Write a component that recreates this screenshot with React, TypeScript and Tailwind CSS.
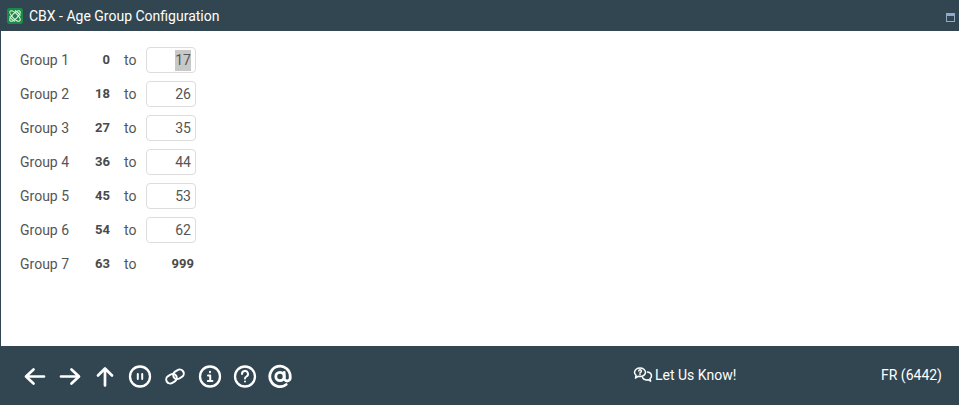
const groups = [
  { name: "Group 1", from: 0, to: 17 },
  { name: "Group 2", from: 18, to: 26 },
  { name: "Group 3", from: 27, to: 35 },
  { name: "Group 4", from: 36, to: 44 },
  { name: "Group 5", from: 45, to: 53 },
  { name: "Group 6", from: 54, to: 62 },
];

function Logo() {
  return (
    <svg width="16" height="16" viewBox="0 0 16 16" className="rounded-[2px]">
      <rect width="16" height="16" rx="1.500" fill="#1a8a45" />
      <g fill="none" stroke="#e6f5ea" strokeWidth="1.100">
        <ellipse cx="8" cy="8" rx="6.800" ry="2.600" transform="rotate(45 8 8)" />
        <ellipse cx="8" cy="8" rx="6.800" ry="2.600" transform="rotate(-45 8 8)" />
        <path d="M2.500 8.500c1.500 2 3.500 4 5.500 5M13.500 7.500c-1.500-2-3.500-4-5.500-5" />
      </g>
    </svg>
  );
}

function NavIcon({ children }: { children: React.ReactNode }) {
  return (
    <svg width="24" height="24" viewBox="0 0 24 24" fill="none" stroke="white" strokeWidth="2.300" strokeLinecap="round" strokeLinejoin="round" className="block">
      {children}
    </svg>
  );
}

export default function App() {
  return (
    <div className="flex h-[405px] w-[959px] flex-col overflow-hidden bg-[#324651] font-['Roboto',sans-serif]">
      <header className="flex h-[31px] shrink-0 items-center pl-[7px] pr-[4px] text-white">
        <Logo />
        <h1 className="ml-[6px] text-[14px] leading-none">CBX - Age Group Configuration</h1>
        <div className="ml-auto mt-[4px] h-[9px] w-[9px] border border-t-[3px] border-[#8faacb]" />
      </header>

      <main className="ml-px flex h-[315px] shrink-0 flex-col bg-white pl-[19px] pt-[16px] text-[14px] text-[#555]">
        {groups.map((g, i) => (
          <div key={g.name} className="mb-[8px] flex h-[26px] items-center">
            <span className="w-[65px]">{g.name}</span>
            <b className="w-[25px] text-right text-[13px] text-[#4a4a4a]">{g.from}</b>
            <span className="ml-[14px] w-[21px]">to</span>
            <div className="ml-[1px] flex h-[26px] w-[50px] items-center justify-end rounded-[4px] border border-[#ddd] pr-[4px]">
              <span className={i === 0 ? "bg-[#c8c8c8]" : ""}>{g.to}</span>
            </div>
          </div>
        ))}
        <div className="flex h-[26px] items-center">
          <span className="w-[65px]">Group 7</span>
          <b className="w-[25px] text-right text-[13px] text-[#4a4a4a]">63</b>
          <span className="ml-[14px] w-[21px]">to</span>
          <b className="w-[49px] text-right text-[13px] text-[#4a4a4a]">999</b>
        </div>
      </main>

      <footer className="flex flex-1 items-center pb-[1px] pl-[23px] pr-[17px] text-[14px] text-white">
        <nav className="flex items-center gap-[11px] pt-[2px]">
          <NavIcon><path strokeWidth="2.700" d="M3.500 12.500h17.500M10.500 5.500l-7.500 7 7.500 7" /></NavIcon>
          <NavIcon><path strokeWidth="2.700" d="M3 12.500h17.500M13.500 5.500l7.500 7-7.500 7" /></NavIcon>
          <NavIcon><path strokeWidth="2.700" d="M12 21.500V4.500M5 11.500l7-7 7 7" /></NavIcon>
          <NavIcon>
            <circle cx="12" cy="12.500" r="10" />
            <path strokeWidth="2" d="M9.800 10v5M14.200 10v5" />
          </NavIcon>
          <NavIcon>
            <rect x="3" y="10.700" width="11" height="8" rx="4" strokeWidth="2" transform="rotate(-32 8.500 14.700)" />
            <rect x="10" y="6.300" width="11" height="8" rx="4" strokeWidth="2" transform="rotate(-32 15.500 10.300)" />
          </NavIcon>
          <NavIcon>
            <circle cx="12" cy="12.500" r="10" />
            <path strokeWidth="2" d="M10 11.500h2.200v5M9.800 17h4.600M12 7.800v.4" />
          </NavIcon>
          <NavIcon>
            <circle cx="12" cy="12.500" r="10" />
            <path strokeWidth="2" d="M9 10a3 3 0 1 1 4.500 2.500c-1 .6-1.500 1-1.500 2M12 17.500v.1" />
          </NavIcon>
          <NavIcon>
            <circle cx="12" cy="12.500" r="4.200" strokeWidth="2.800" />
            <path d="M16.200 8.500v5.500a3 3 0 0 0 6 0v-1.500a10.200 10.200 0 1 0-4 8" strokeWidth="2.800" />
          </NavIcon>
        </nav>
        <div className="ml-[341px] flex items-center gap-[2px]">
          <svg width="20" height="18" viewBox="0 0 20 18" fill="none" stroke="white" strokeWidth="1.500" strokeLinecap="round" strokeLinejoin="round">
            <path d="M7 2c3 0 5.500 1.900 5.500 4.300S10 10.600 7 10.600c-.7 0-1.300-.1-1.900-.3L2.500 12l.6-2.700C2 8.500 1.500 7.500 1.500 6.300 1.500 3.900 4 2 7 2z" />
            <path d="M14.500 6c2.200.4 4 1.900 4 3.900 0 1-.5 2-1.500 2.700l.6 2.600-2.600-1.500c-2.200.5-4.600-.3-5.500-2" />
            <path d="M5.800 5a1.300 1.300 0 1 1 1.700 1.400c-.4.200-.5.400-.5.800M7 8.600v.1" />
          </svg>
          <span>Let Us Know!</span>
        </div>
        <span className="ml-auto">FR (6442)</span>
      </footer>
    </div>
  );
}
